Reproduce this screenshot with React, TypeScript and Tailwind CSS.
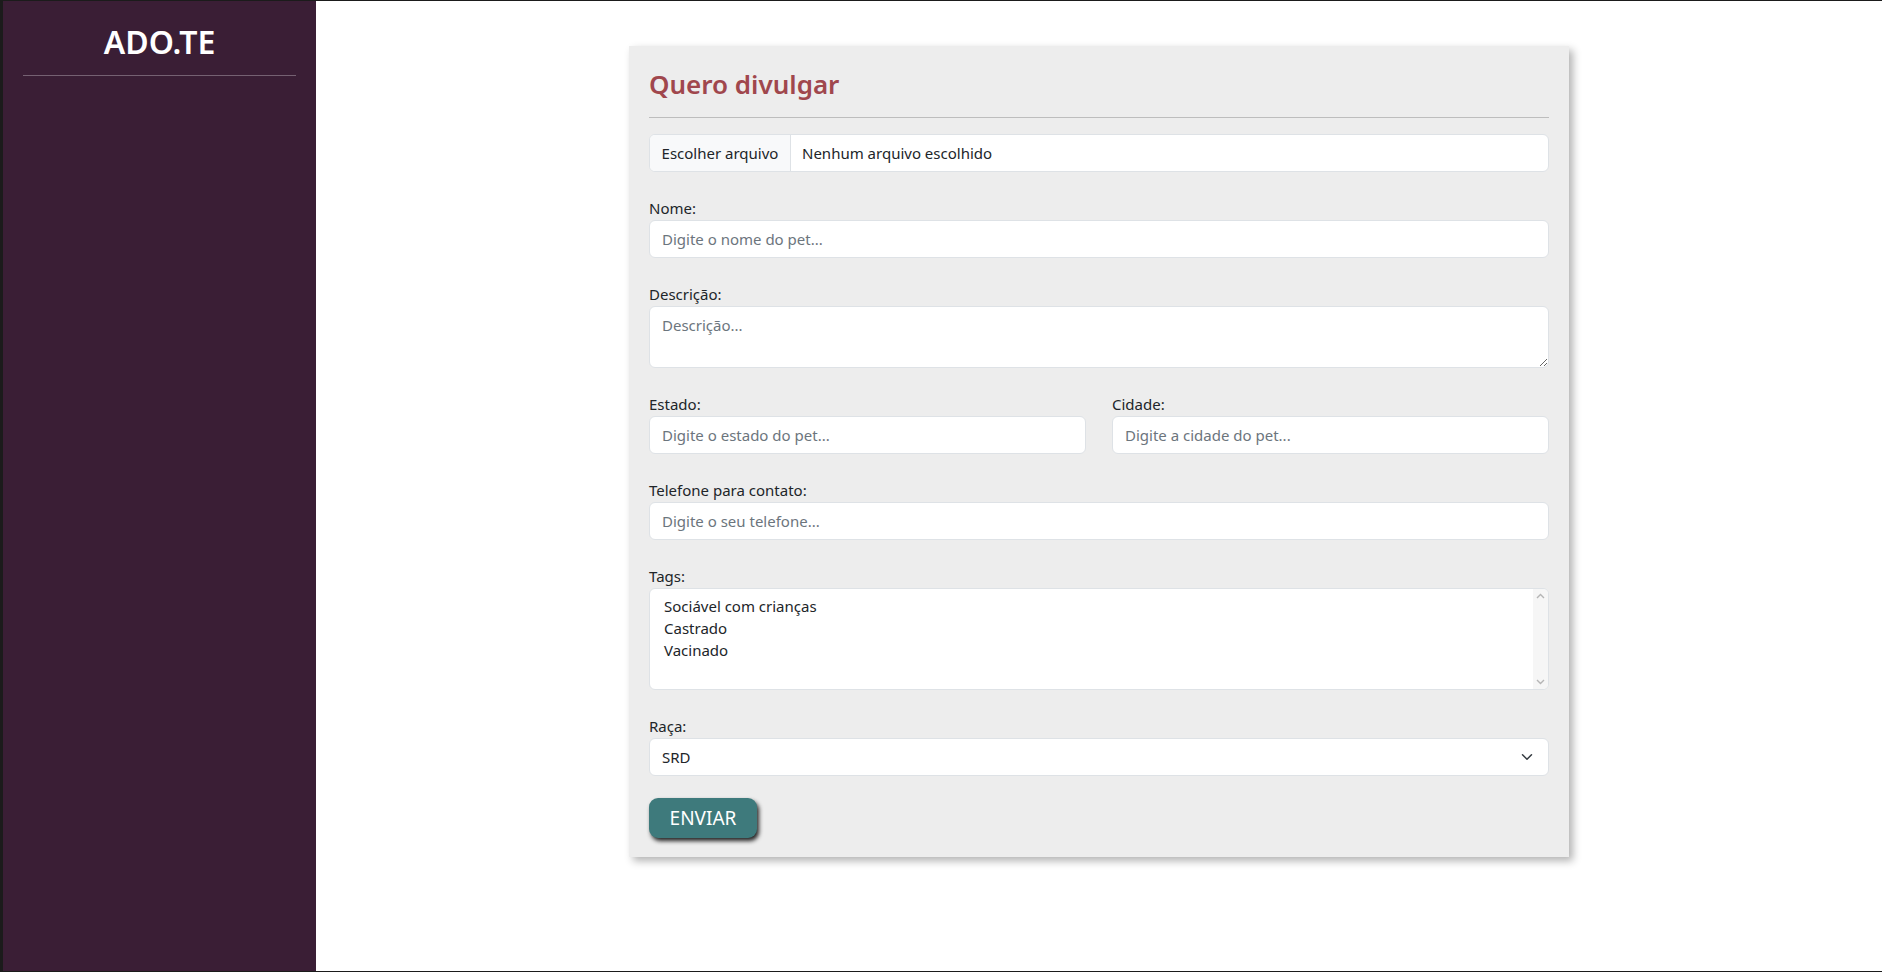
import React from "react";

const font = { fontFamily: '"Noto Sans", "Open Sans", Arial, sans-serif' };

const inputCls =
  "block w-full h-[38px] rounded-[6px] border border-[#dee2e6] bg-white px-3 text-[15px] text-[#212529] placeholder:text-[#6c757d] outline-none";

const Field: React.FC<{ label: string; children: React.ReactNode; className?: string }> = ({
  label,
  children,
  className,
}) => (
  <div className={className ?? "mb-6"}>
    <label className="block h-6 text-[15px] leading-6 text-[#212529]">{label}</label>
    {children}
  </div>
);

const App: React.FC = () => {
  const tags = ["Sociável com crianças", "Castrado", "Vacinado"];

  return (
    <div
      className="flex h-[972px] w-full border-t border-b border-l-[3px] border-[#1b1b1b] bg-white"
      style={font}
    >
      <aside className="w-[313px] shrink-0 bg-[#3a1e35] px-5 pt-[17px]">
        <h1 className="text-center text-[32px] font-semibold leading-[48px] text-white">ADO.TE</h1>
        <hr className="mt-[9px] border-0 border-t border-white/30" />
      </aside>

      <main className="flex-1 pt-[45px]">
        <div className="mx-auto w-[940px] bg-[#ededed] px-5 pt-[21px] pb-[19px] shadow-[4px_4px_8px_rgba(0,0,0,0.3)]">
          <h2 className="text-[26px] font-semibold leading-[34px] text-[#a0474d]">Quero divulgar</h2>
          <hr className="mt-4 mb-4 border-0 border-t border-[#bdbdbd]" />

          {/* file */}
          <div className="mb-6 flex h-[38px] overflow-hidden rounded-[6px] border border-[#dee2e6] bg-white text-[15px] text-[#212529]">
            <div className="flex w-[141px] items-center justify-center border-r border-[#dee2e6] bg-[#f8f9fa]">
              Escolher arquivo
            </div>
            <div className="flex items-center px-[11px]">Nenhum arquivo escolhido</div>
          </div>

          <Field label="Nome:">
            <input className={inputCls} placeholder="Digite o nome do pet..." />
          </Field>

          <Field label="Descrição:">
            <textarea
              className="block h-[62px] w-full resize-y rounded-[6px] border border-[#dee2e6] bg-white px-3 py-[6px] text-[15px] leading-6 text-[#212529] placeholder:text-[#6c757d] outline-none"
              placeholder="Descrição..."
            />
          </Field>

          <div className="mb-6 grid grid-cols-2 gap-x-[26px]">
            <Field label="Estado:" className="">
              <input className={inputCls} placeholder="Digite o estado do pet..." />
            </Field>
            <Field label="Cidade:" className="">
              <input className={inputCls} placeholder="Digite a cidade do pet..." />
            </Field>
          </div>

          <Field label="Telefone para contato:">
            <input className={inputCls} placeholder="Digite o seu telefone..." />
          </Field>

          <Field label="Tags:">
            <div className="flex h-[102px] overflow-hidden rounded-[6px] border border-[#dee2e6] bg-white text-[15px] text-[#212529]">
              <div className="flex-1 pl-[14px] pt-[6px] leading-[22px]">
                {tags.map((t) => (
                  <div key={t}>{t}</div>
                ))}
              </div>
              <div className="flex w-[15px] flex-col items-center justify-between bg-[#f6f6f6] py-[4px]">
                <svg width="9" height="6" viewBox="0 0 9 6">
                  <path d="M1 5 L4.5 1.5 L8 5" fill="none" stroke="#b5b5b5" strokeWidth="1.4" />
                </svg>
                <svg width="9" height="6" viewBox="0 0 9 6">
                  <path d="M1 1 L4.5 4.5 L8 1" fill="none" stroke="#b5b5b5" strokeWidth="1.4" />
                </svg>
              </div>
            </div>
          </Field>

          <Field label="Raça:" className="">
            <div className="flex h-[38px] items-center justify-between rounded-[6px] border border-[#dee2e6] bg-white pl-3 pr-[13px] text-[15px] text-[#212529]">
              <span>SRD</span>
              <svg width="16" height="12" viewBox="0 0 16 16">
                <path
                  d="m2 5 6 6 6-6"
                  fill="none"
                  stroke="#343a40"
                  strokeWidth="2"
                  strokeLinecap="round"
                  strokeLinejoin="round"
                />
              </svg>
            </div>
          </Field>

          <button className="mt-[22px] h-10 w-[108px] rounded-[9px] bg-[#3e7a7c] text-[19px] text-white shadow-[2px_3px_4px_rgba(0,0,0,0.85)]">
            ENVIAR
          </button>
        </div>
      </main>
    </div>
  );
};

export default App;
